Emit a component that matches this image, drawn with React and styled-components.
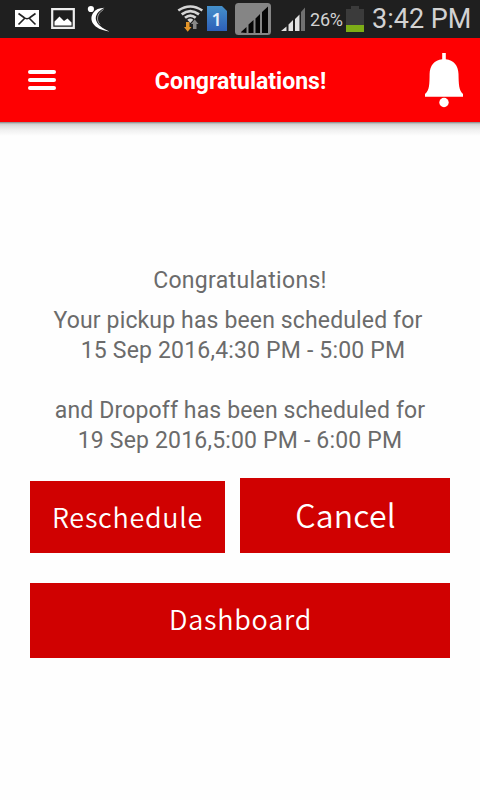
import React from "react";
import styled, { createGlobalStyle } from "styled-components";

const GlobalStyle = createGlobalStyle`
  * { box-sizing: border-box; }
  body { margin: 0; background: #fff; font-family: Roboto, "Liberation Sans", sans-serif; }
`;

const Screen = styled.div`
  width: 480px;
  height: 800px;
  overflow: hidden;
  display: flex;
  flex-direction: column;
  background: #fefefe;
`;

const StatusBar = styled.header`
  height: 38px;
  flex: none;
  display: flex;
  background: #1f1f1f;
  color: #d2d2d2;
`;

const StatusIcon = styled.svg`
  flex: none;
  display: block;
  width: ${(p) => p.$w}px;
  height: 38px;
  margin-left: ${(p) => p.$gap || 0}px;
`;

const StatusText = styled.span`
  flex: none;
  display: block;
  white-space: nowrap;
  line-height: ${(p) => p.$line}px;
  font-size: ${(p) => p.$size}px;
  width: ${(p) => p.$w}px;
  margin-left: ${(p) => p.$gap}px;
  letter-spacing: ${(p) => p.$spacing || 0}px;
`;

const SimNumber = styled.text`
  font: 600 18px "Noto Sans", Roboto, sans-serif;
  fill: #e6eefa;
`;

const AppBar = styled.nav`
  height: 84px;
  flex: none;
  display: grid;
  grid-template-columns: 84px 1fr 84px;
  align-items: center;
  background: #fe0002;
`;

const BarShadow = styled.div`
  height: 14px;
  flex: none;
  background: linear-gradient(#858585 0, #a9a9a9 1px, #cfcfcf 2px, #dedede 4px, #f0f0f0 8px, #fefefe 14px);
`;

const MenuButton = styled.button`
  width: 28px;
  height: 20px;
  margin: 0 0 0 28px;
  padding: 0;
  border: 0;
  background: none;
  display: flex;
  flex-direction: column;
  gap: 4px;
`;

const MenuLine = styled.span`
  height: 4px;
  border-radius: 2px;
  background: #fff;
`;

const Title = styled.h1`
  margin: 3px 0 0 1px;
  text-align: center;
  color: #fff;
  font-size: 23px;
  font-weight: 700;
  line-height: 30px;
`;

const BellButton = styled.button`
  width: 40px;
  height: 56px;
  margin-left: 28px;
  padding: 0;
  border: 0;
  background: none;
`;

const Content = styled.main`
  padding: 130px 30px 0;
`;

const Message = styled.div`
  color: #6b6b6b;
  font-size: 23px;
  line-height: 30px;
  text-align: center;
  white-space: nowrap;
`;

const Line = styled.p`
  margin: ${(p) => p.$top || 0}px 0 0;
  padding-left: ${(p) => p.$left || 0}px;
  padding-right: ${(p) => p.$right || 0}px;
  letter-spacing: ${(p) => p.$spacing || 0}px;
`;

const Actions = styled.div`
  margin-top: 22px;
  display: grid;
  grid-template-columns: 195px 210px;
  column-gap: 15px;
  row-gap: 30px;
  align-items: end;
`;

const ActionButton = styled.button`
  grid-column: ${(p) => (p.$wide ? "1 / -1" : "auto")};
  height: ${(p) => p.$height || 75}px;
  padding: 0 0 ${(p) => p.$lift || 0}px ${(p) => p.$left || 0}px;
  border: 0;
  background: #d00101;
  color: #fff;
  font-family: "Noto Sans CJK SC", sans-serif;
  font-weight: 350;
  font-size: ${(p) => p.$size}px;
  line-height: 40px;
  letter-spacing: ${(p) => p.$spacing}px;
`;

const MailIcon = () => (
  <StatusIcon $w={24} $gap={15} viewBox="0 0 24 38">
    <path d="M0 10h24v17H0z" fill="#fff" />
    <path d="M3.500 13.500 9 17.500q3 2.500 6 0l5.500-4M3.500 24.500l6-6M20.500 24.500l-6-6" fill="none" stroke="#222" strokeWidth="1.600" />
  </StatusIcon>
);

const PictureIcon = () => (
  <StatusIcon $w={24} $gap={12} viewBox="0 0 24 38">
    <path d="M1.200 9.200h21.600v18.600H1.200z" fill="none" stroke="#eee" strokeWidth="2.200" />
    <path d="M3.500 25.500v-4l5-5 4.500 4.500 3.500-2.500 4 4v3z" fill="#fff" />
  </StatusIcon>
);

const SwooshIcon = () => (
  <StatusIcon $w={24} $gap={12} viewBox="0 0 24 38">
    <circle cx="3.900" cy="9" r="3.100" fill="#fff" />
    <path d="M17.500 7.800C12 8 8.500 9.500 6.500 12.500 3.800 16 3.800 20 6 23.500 9 28 14 30 22.500 31.500 15 28 10.500 25 9 20c-1-4.500 2-9 8.500-12.200z" fill="#fff" />
    <path d="M16.500 9.500C9.500 14 9 20 13 24.500" fill="none" stroke="#aaa" strokeWidth=".9" />
  </StatusIcon>
);

const WifiIcon = () => (
  <StatusIcon $w={28} $gap={66} viewBox="177 0 28 38">
    <g fill="none" stroke="#d5d5d5" strokeWidth="2.700">
      <path d="M178.300 10.500Q190.300 2.500 202.300 10.500" />
      <path d="M181.700 14.300Q190.300 7.800 199 14.300" />
      <path d="M185 17.800Q190.300 13.300 195.700 17.800" />
    </g>
    <path d="M187.300 19.700q3-2.500 6 0l-3 3.300z" fill="#d5d5d5" />
    <path d="M186 22h3.500v5h2l-3.800 4.700-3.700-4.700h2z" fill="#e39428" />
    <path d="M193 29v-5h-2l3.700-4.500 3.800 4.500h-2v5z" fill="#888" />
  </StatusIcon>
);

const SimIcon = () => (
  <StatusIcon $w={21} $gap={2} viewBox="0 0 21 38">
    <defs>
      <linearGradient id="simFill" x1="0" y1="0" x2="0" y2="1">
        <stop offset="0" stopColor="#4590ca" />
        <stop offset="1" stopColor="#2d5fb8" />
      </linearGradient>
    </defs>
    <path d="M0 6h15l5 5v20H0z" fill="url(#simFill)" />
    <SimNumber x="4.500" y="25.500">1</SimNumber>
  </StatusIcon>
);

const NoSignalIcon = () => (
  <StatusIcon $w={36} $gap={7} viewBox="0 0 36 38">
    <rect y="3" width="36" height="32" rx="3.500" fill="#858585" />
    <path d="M6 32.500v-.5l5.500-5v6zM13.500 33v-8.500l5-4.500v13zM20.500 33V18.500l4.500-4.500v19zM27 33V12l6-5.500V33z" fill="#050505" />
  </StatusIcon>
);

const SignalIcon = () => (
  <StatusIcon $w={25} $gap={10} viewBox="0 0 25 38">
    <path d="M0 31l5.500-4.500V31zM7.500 31v-6.500l4.500-4.500v11zM14 31V19l4.500-4.500V31z" fill="#e2e2e2" />
    <path d="M20 31V12l4-4.500V31z" fill="#707070" />
  </StatusIcon>
);

const BatteryIcon = () => (
  <StatusIcon $w={18} $gap={3} viewBox="0 0 18 38">
    <path d="M0 9h5V6h8v3h5v16H0z" fill="#3b3b3b" />
    <path d="M0 25h18v7H0z" fill="#7dad16" />
  </StatusIcon>
);

const BellIcon = () => (
  <svg width="40" height="56" viewBox="0 0 40 56" display="block">
    <path d="M18.200 1h3.600v6.200c7.800 1 12.500 6.200 12.700 14.800.2 10 .3 16.500 4.500 20v2.700H1V42c4.500-3.500 4.500-10 4.600-20 .2-8.600 4.800-13.800 12.600-14.800z" fill="#fff" />
    <circle cx="20" cy="50.500" r="4.700" fill="#fff" />
  </svg>
);

export default function App() {
  return (
    <Screen>
      <GlobalStyle />
      <StatusBar>
        <MailIcon />
        <PictureIcon />
        <SwooshIcon />
        <WifiIcon />
        <SimIcon />
        <NoSignalIcon />
        <SignalIcon />
        <StatusText $size={18} $line={40} $w={33} $gap={4} $spacing={-0.2}>26%</StatusText>
        <BatteryIcon />
        <StatusText $size={27} $line={38} $w={104} $gap={8}>3:42 PM</StatusText>
      </StatusBar>
      <AppBar>
        <MenuButton aria-label="Menu">
          <MenuLine />
          <MenuLine />
          <MenuLine />
        </MenuButton>
        <Title>Congratulations!</Title>
        <BellButton aria-label="Notifications">
          <BellIcon />
        </BellButton>
      </AppBar>
      <BarShadow />
      <Content>
        <Message>
          <Line $spacing={0.32}>Congratulations!</Line>
          <Line $top={10} $right={4} $spacing={0.14}>Your pickup has been scheduled for</Line>
          <Line $left={6} $spacing={0.18}>15 Sep 2016,4:30 PM - 5:00 PM</Line>
          <Line $top={30} $spacing={0.14}>and Dropoff has been scheduled for</Line>
          <Line $spacing={0.18}>19 Sep 2016,5:00 PM - 6:00 PM</Line>
        </Message>
        <Actions>
          <ActionButton $height={72} $size={27} $spacing={0.7}>Reschedule</ActionButton>
          <ActionButton $size={32} $spacing={0.2} $lift={3} $left={1}>Cancel</ActionButton>
          <ActionButton $wide $size={27} $spacing={0.75} $lift={3} $left={1}>Dashboard</ActionButton>
        </Actions>
      </Content>
    </Screen>
  );
}
